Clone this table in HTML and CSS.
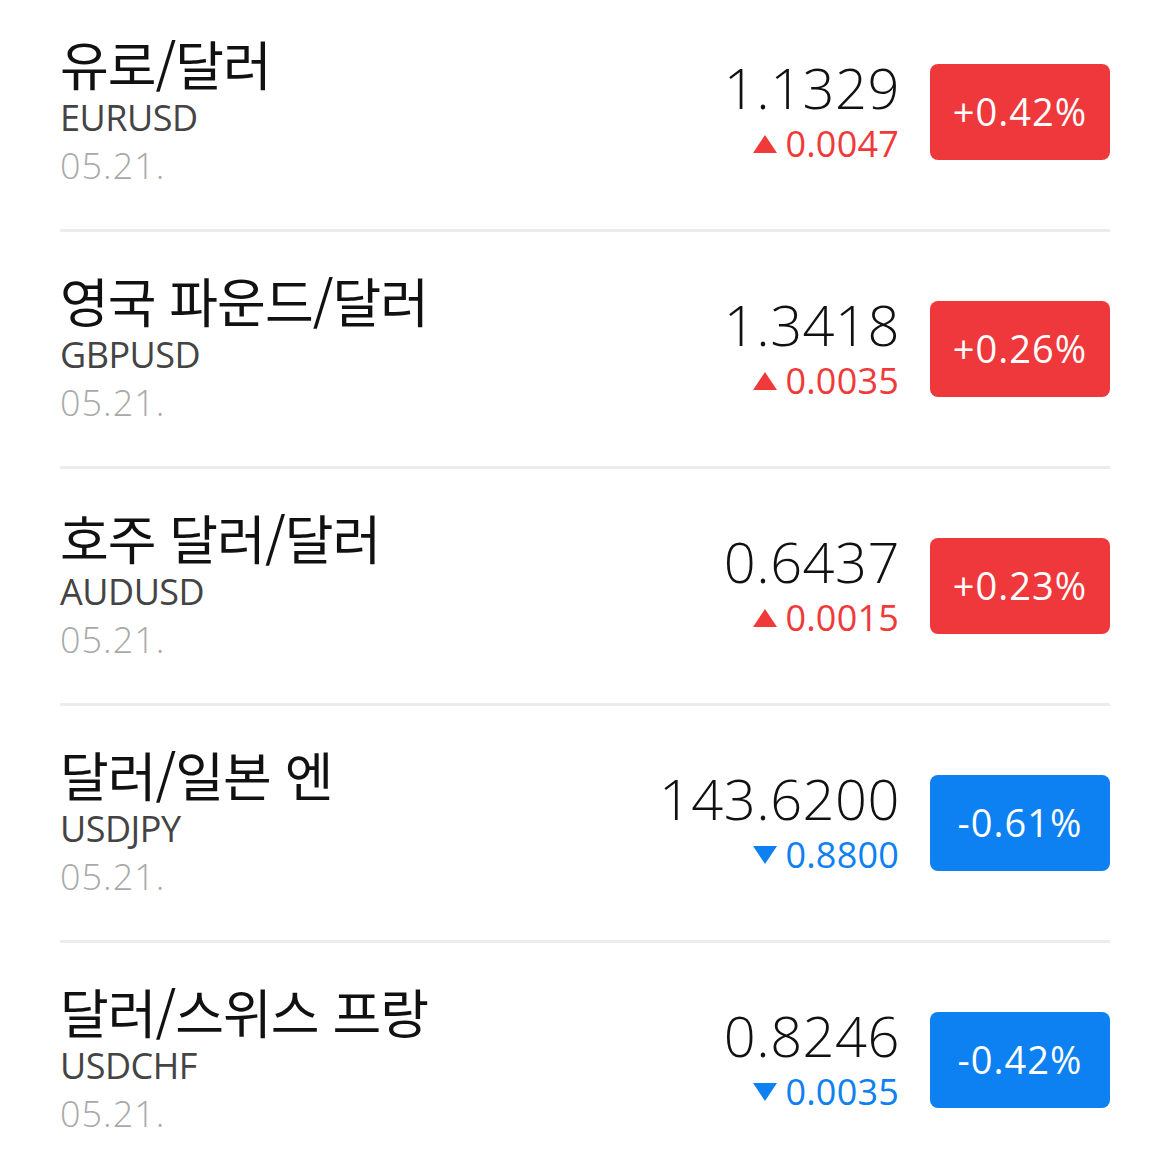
FILE: index.html
```html
<!DOCTYPE html>
<html lang="ko">
<head>
<meta charset="utf-8">
<link rel="stylesheet" href="styles.css">
</head>
<body>
<ul class="list">
  <li class="row">
    <div class="info">
      <div class="name">유로/달러</div>
      <div class="code">EURUSD</div>
      <div class="date">05.21.</div>
    </div>
    <div class="quote">
      <div class="price">1.1329</div>
      <div class="change up"><span class="tri"></span>0.0047</div>
    </div>
    <div class="badge up">+0.42%</div>
  </li>
  <li class="row">
    <div class="info">
      <div class="name">영국 파운드/달러</div>
      <div class="code">GBPUSD</div>
      <div class="date">05.21.</div>
    </div>
    <div class="quote">
      <div class="price">1.3418</div>
      <div class="change up"><span class="tri"></span>0.0035</div>
    </div>
    <div class="badge up">+0.26%</div>
  </li>
  <li class="row">
    <div class="info">
      <div class="name">호주 달러/달러</div>
      <div class="code">AUDUSD</div>
      <div class="date">05.21.</div>
    </div>
    <div class="quote">
      <div class="price">0.6437</div>
      <div class="change up"><span class="tri"></span>0.0015</div>
    </div>
    <div class="badge up">+0.23%</div>
  </li>
  <li class="row">
    <div class="info">
      <div class="name">달러/일본 엔</div>
      <div class="code">USDJPY</div>
      <div class="date">05.21.</div>
    </div>
    <div class="quote">
      <div class="price">143.6200</div>
      <div class="change down"><span class="tri"></span>0.8800</div>
    </div>
    <div class="badge down">-0.61%</div>
  </li>
  <li class="row">
    <div class="info">
      <div class="name">달러/스위스 프랑</div>
      <div class="code">USDCHF</div>
      <div class="date">05.21.</div>
    </div>
    <div class="quote">
      <div class="price">0.8246</div>
      <div class="change down"><span class="tri"></span>0.0035</div>
    </div>
    <div class="badge down">-0.42%</div>
  </li>
</ul>
</body>
</html>
```
FILE: styles.css
```css
html, body {
  margin: 0;
  padding: 0;
  background: #fff;
}
body {
  font-family: "Open Sans", "Noto Sans CJK KR", sans-serif;
  font-weight: 300;
  color: #111;
}
.list {
  list-style: none;
  margin: -5px 0 0;
  padding: 0 60px;
}
.row {
  display: flex;
  align-items: center;
  height: 234px;
  border-bottom: 3px solid #ececec;
}
.info {
  flex: 1;
  display: flex;
  flex-direction: column;
  padding-bottom: 2px;
}
.name {
  font-family: "Noto Sans CJK KR", sans-serif;
  font-weight: 400;
  font-size: 53px;
  line-height: 62px;
  color: #111;
  letter-spacing: -1px;
}
.code {
  font-size: 36px;
  line-height: 48px;
  color: #444;
  font-weight: 400;
  letter-spacing: -0.5px;
}
.date {
  font-size: 36px;
  line-height: 48px;
  color: #a9a9a9;
  letter-spacing: 1px;
}
.quote {
  display: flex;
  flex-direction: column;
  align-items: flex-end;
  margin-right: 31px;
  padding-top: 3px;
  padding-bottom: 4px;
}
.price {
  font-size: 56px;
  line-height: 58px;
  font-weight: 350;
  color: #111;
  letter-spacing: 0.5px;
  margin-right: -1px;
}
.change {
  font-size: 36px;
  line-height: 42px;
  margin-top: 7px;
  display: flex;
  align-items: center;
  letter-spacing: 0.2px;
  font-weight: 400;
}
.change.up { color: #f03a3a; }
.change.down { color: #0d80f2; }
.tri {
  width: 0;
  height: 0;
  margin-right: 8px;
  border-left: 12px solid transparent;
  border-right: 12px solid transparent;
}
.up .tri { border-bottom: 18px solid #f03a3a; }
.down .tri { border-top: 18px solid #0d80f2; }
.badge {
  width: 180px;
  height: 96px;
  border-radius: 8px;
  color: #fff;
  font-size: 38px;
  font-weight: 400;
  letter-spacing: 1px;
  display: flex;
  align-items: center;
  justify-content: center;
  padding-bottom: 2px;
  box-sizing: border-box;
}
.badge.up { background: #ef383b; }
.badge.down { background: #0d80f2; }
```
